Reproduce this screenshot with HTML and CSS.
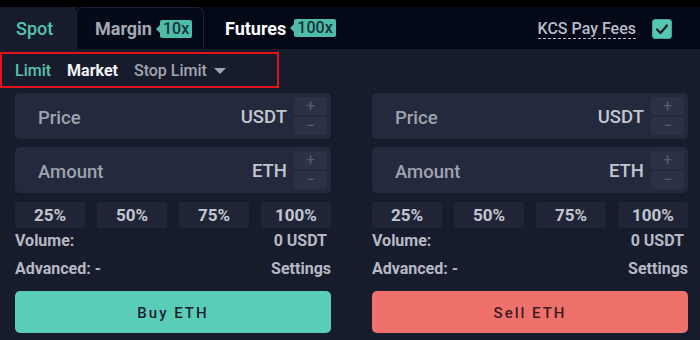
FILE: index.html
```html
<!DOCTYPE html>
<html>
<head>
<meta charset="utf-8">
<link rel="stylesheet" href="styles.css">
</head>
<body>
<div class="topbar"></div>
<div class="header">
  <div class="tab spot">Spot</div>
  <div class="tab margin">Margin<span class="badge">10x</span></div>
  <div class="tab futures">Futures<span class="badge">100x</span></div>
  <div class="spacer"></div>
  <div class="kcs">KCS Pay Fees</div>
  <div class="check"><svg width="14" height="12" viewBox="0 0 14 12"><path d="M2 6.5 L5.5 10 L12 2.5" fill="none" stroke="#0e1a22" stroke-width="2.2" stroke-linecap="round" stroke-linejoin="round"/></svg></div>
</div>
<div class="types">
  <span class="type active">Limit</span>
  <span class="type sel">Market</span>
  <span class="type">Stop Limit</span>
  <span class="caret"></span>
</div>
<div class="columns">
  <div class="col">
    <div class="field"><span class="label">Price</span><span class="unit">USDT</span><div class="steps"><span class="step">+</span><span class="step">−</span></div></div>
    <div class="field"><span class="label">Amount</span><span class="unit">ETH</span><div class="steps"><span class="step">+</span><span class="step">−</span></div></div>
    <div class="pcts"><span class="pct">25%</span><span class="pct">50%</span><span class="pct">75%</span><span class="pct">100%</span></div>
    <div class="row"><span>Volume:</span><span class="vol">0 USDT</span></div>
    <div class="row adv"><span>Advanced: -</span><span>Settings</span></div>
    <div class="btn buy">Buy ETH</div>
  </div>
  <div class="col">
    <div class="field"><span class="label">Price</span><span class="unit">USDT</span><div class="steps"><span class="step">+</span><span class="step">−</span></div></div>
    <div class="field"><span class="label">Amount</span><span class="unit">ETH</span><div class="steps"><span class="step">+</span><span class="step">−</span></div></div>
    <div class="pcts"><span class="pct">25%</span><span class="pct">50%</span><span class="pct">75%</span><span class="pct">100%</span></div>
    <div class="row"><span>Volume:</span><span class="vol">0 USDT</span></div>
    <div class="row adv"><span>Advanced: -</span><span>Settings</span></div>
    <div class="btn sell">Sell ETH</div>
  </div>
</div>
</body>
</html>
```
FILE: styles.css
```css
* { box-sizing: border-box; }
html, body { margin: 0; padding: 0; }
body {
  width: 700px;
  height: 340px;
  overflow: hidden;
  background: #171c2d;
  font-family: Roboto, "Liberation Sans", sans-serif;
  color: #c3c6cf;
}
.topbar { height: 7px; background: #000; }
.header {
  height: 42px;
  display: flex;
  align-items: stretch;
  background: #030817;
}
.tab {
  display: flex;
  align-items: center;
  font-size: 18px;
  font-weight: 500;
}
.spot {
  width: 76px;
  padding-left: 16px;
  background: #171c2d;
  color: #56c4ae;
}
.margin {
  width: 128px;
  padding-left: 18px;
  background: #050a19;
  border: 1px solid #1b2132;
  border-bottom: none;
  border-radius: 6px 6px 0 0;
  color: #a6a9b4;
  font-weight: 700;
}
.futures {
  padding-left: 21px;
  color: #ffffff;
  font-weight: 700;
}
.badge {
  position: relative;
  margin-left: 8px;
  background: #4fbca7;
  color: #17323a;
  font-size: 16px;
  font-weight: 500;
  line-height: 18px;
  padding: 0 3px;
  border-radius: 2px;
}
.badge::before {
  content: "";
  position: absolute;
  left: -4px;
  top: 5px;
  border-top: 4px solid transparent;
  border-bottom: 4px solid transparent;
  border-right: 4px solid #4fbca7;
}
.spacer { flex: 1; }
.kcs {
  align-self: center;
  font-size: 16px;
  font-weight: 500;
  color: #b9bcc7;
  border-bottom: 1px dashed #b9bcc7;
  line-height: 18px;
  margin-top: 2px;
}
.check {
  align-self: center;
  width: 20px;
  height: 20px;
  margin: 2px 28px 0 16px;
  background: #56c7b1;
  border: 1px solid #3aa693;
  border-radius: 3px;
  display: flex;
  align-items: center;
  justify-content: center;
}
.types {
  margin-top: 3px;
  width: 279px;
  height: 36px;
  border: 2px solid #e3131b;
  display: flex;
  align-items: center;
  padding-left: 13px;
  font-size: 16px;
  font-weight: 500;
}
.type { color: #a2a5b0; margin-right: 16px; }
.type.active { color: #56c4ae; margin-right: 16px; }
.type.sel { color: #f2f3f5; font-weight: 700; }
.caret {
  margin-left: -9px;
  margin-top: 2px;
  border-left: 6px solid transparent;
  border-right: 6px solid transparent;
  border-top: 6px solid #a2a5b0;
}
.columns {
  display: grid;
  grid-template-columns: 316px 316px;
  column-gap: 41px;
  padding-left: 15px;
  margin-top: 5px;
}
.col { display: flex; flex-direction: column; }
.field {
  height: 46px;
  margin-bottom: 8px;
  border-radius: 5px;
  background: #242a3d;
  display: flex;
  align-items: center;
  padding: 0 4px 0 23px;
}
.label { flex: 1; font-size: 18.5px; color: #9fa3af; font-weight: 500; padding-top: 4px; }
.unit { font-size: 18.5px; color: #c3c6cf; font-weight: 500; margin-right: 7px; padding-top: 1px; }
.steps { display: flex; flex-direction: column; gap: 2px; }
.step {
  width: 33px;
  height: 18px;
  background: #2c3245;
  border-radius: 2px;
  color: #555c6e;
  font-size: 16px;
  line-height: 18px;
  text-align: center;
}
.pcts {
  margin-top: 1px;
  display: flex;
  justify-content: space-between;
}
.pct {
  width: 70px;
  height: 26px;
  background: #1f2537;
  border-radius: 2px;
  text-align: center;
  line-height: 27px;
  font-size: 17px;
  font-weight: 700;
  color: #c3c6cf;
}
.row {
  display: flex;
  justify-content: space-between;
  font-size: 16px;
  font-weight: 700;
  color: #b6b9c3;
  height: 26px;
  line-height: 26px;
}
.vol { margin-right: 4px; }
.row.adv { height: 28px; line-height: 30px; }
.btn {
  margin-top: 9px;
  height: 42px;
  border-radius: 5px;
  text-align: center;
  line-height: 45px;
  font-size: 15px;
  font-weight: 500;
  letter-spacing: 2px;
  color: #1c2232;
}
.buy { background: #5acdb8; }
.sell { background: #ef716b; color: #3a1c22; }
```
